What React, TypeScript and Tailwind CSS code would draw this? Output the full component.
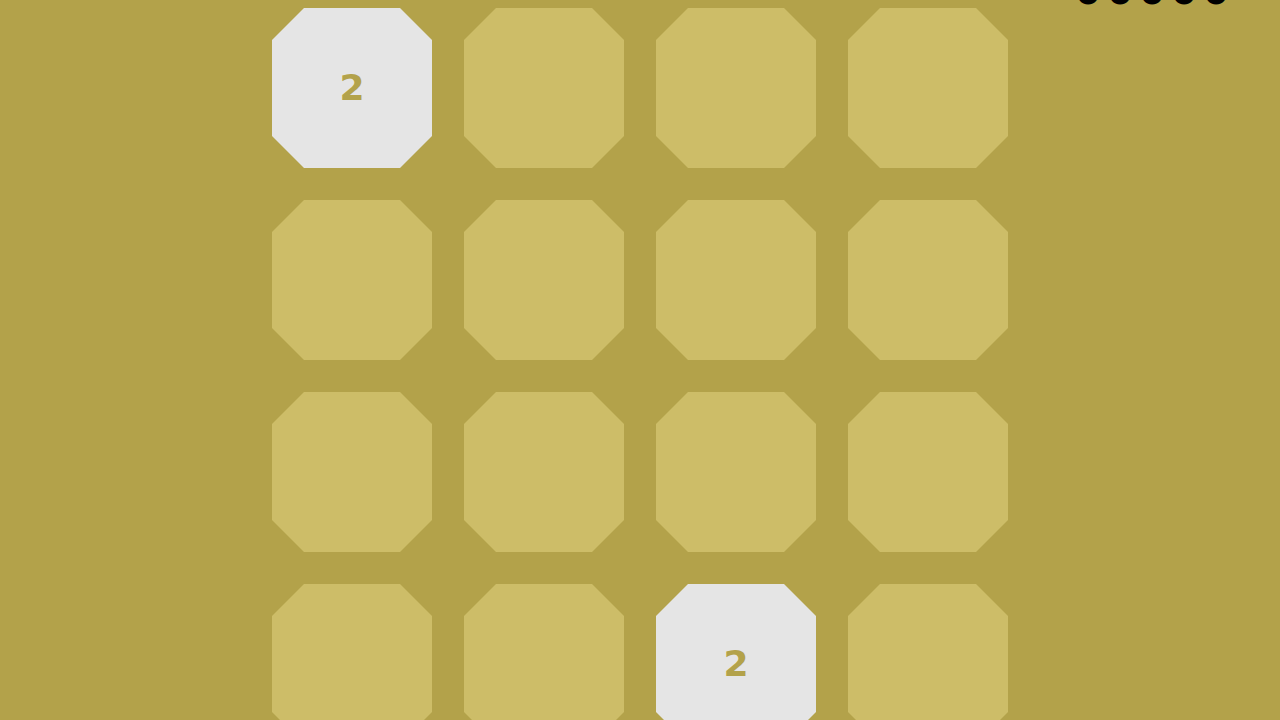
import React from 'react';

const BOARD = [
  [2, 0, 0, 0],
  [0, 0, 0, 0],
  [0, 0, 0, 0],
  [0, 0, 2, 0],
];

const OCTAGON = {
  clipPath: 'polygon(20% 0, 80% 0, 100% 20%, 100% 80%, 80% 100%, 20% 100%, 0 80%, 0 20%)',
};

function Tile({ value }: { value: number }) {
  return (
    <div
      style={OCTAGON}
      className={
        value
          ? 'w-[160px] h-[160px] bg-[#e5e5e5] flex items-center justify-center'
          : 'w-[160px] h-[160px] bg-[#cdbd68]'
      }
    >
      {value > 0 && (
        <span className="text-[#b3a24a] text-[36px] font-bold leading-none font-['DejaVu_Sans',sans-serif]">
          {value}
        </span>
      )}
    </div>
  );
}

export default function App() {
  const score = '00000';
  return (
    <div className="relative h-screen w-full overflow-hidden bg-[#b3a24a] flex justify-center pt-[8px]">
      {/* score sits mostly above the fold */}
      <div className="absolute top-[-26px] right-[54px] flex gap-[12px] text-black text-[36px] font-bold leading-[36px] font-['DejaVu_Sans',sans-serif]">
        {score.split('').map((c, i) => (
          <span key={i} className="w-[20px] flex justify-center">
            {c}
          </span>
        ))}
      </div>

      <div className="grid grid-cols-4 gap-[32px] content-start">
        {BOARD.flat().map((v, i) => (
          <Tile key={i} value={v} />
        ))}
      </div>
    </div>
  );
}
